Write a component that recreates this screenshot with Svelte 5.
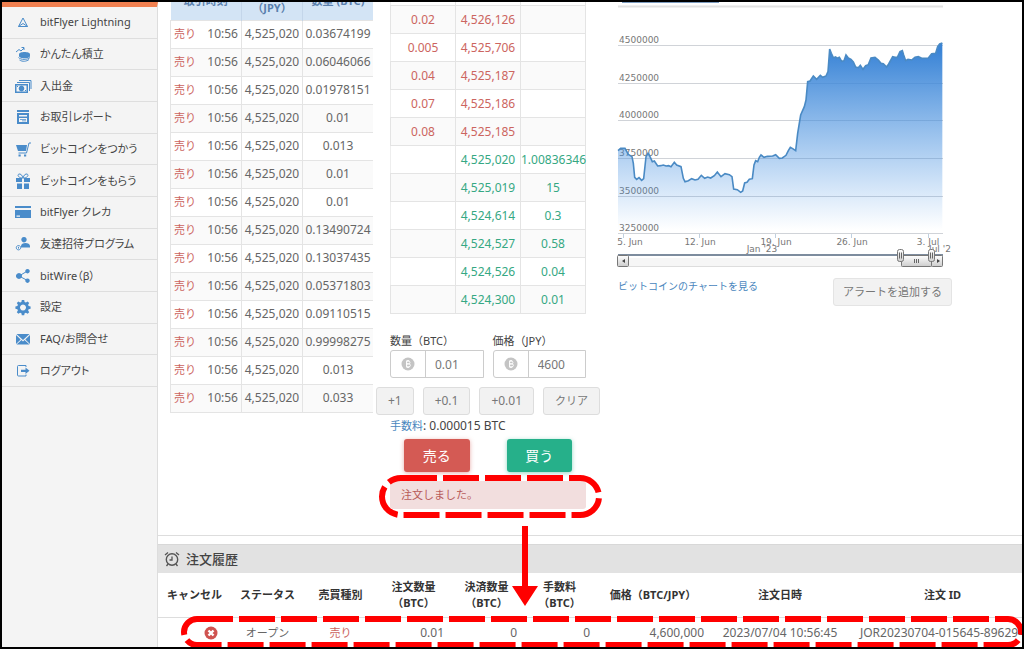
<script lang="ts">
  interface MenuItem {
    label: string;
    // fill and line paths, both on an 18 x 18 grid
    fill?: string;
    line?: string;
  }

  const menu: MenuItem[] = [
    { label: 'bitFlyer Lightning', line: 'M9 5 4.500 13.500h9zM4.500 13.500 9 10.500l4.500 3' },
    {
      label: 'かんたん積立',
      line: 'M2 7l3-2.500 2 1.500 3-3M7.500 2.500H10V5M4.500 12.500c2 2.500 9 2.500 11.500 0M5.500 15c3 2 7 1.500 9.500-.5',
      fill: 'M5 9.500c0-3.200 11-3.200 11 0v1.500c0 3-11 3-11 0z',
    },
    {
      label: '入出金',
      fill: 'M1 7h13v9H1zM2.500 8.500v6h10v-6zM7.500 8.700a2.800 2.800 0 1 0 .01 0zM3 9h1v1H3zM11 13h1v1h-1z',
      line: 'M3 5.500h12.500V14M5 3.500h12V12',
    },
    {
      label: 'お取引レポート',
      fill: 'M3 2h12v2H3zM3 5h12v11H3zM5 7v1.500h8V7zM5 10v4h8v-4zM6 11h6v.8H6zM8 12.500h4v.8H8z',
    },
    {
      label: 'ビットコインをつかう',
      fill: 'M2 5h11l-1 6H4zM4.500 14.500h2.200v2H4.500zM10 14.500h2.200v2H10z',
      line: 'M17 3h-2l-2.500 10H4.500',
    },
    {
      label: 'ビットコインをもらう',
      fill: 'M2 6h14v4H10V6H8v4H2zM3 11.500h5V17H3zM10 11.500h5V17h-5z',
      line: 'M9 6C3 6 3 1.500 6 2c2 .3 3 4 3 4s1-3.700 3-4c3-.5 3 4-3 4z',
    },
    { label: 'bitFlyer クレカ', fill: 'M1 3h16v2H1zM1 7h16v8H1zM2.500 12.500v1.300H6v-1.300z' },
    {
      label: '友達招待プログラム',
      fill: 'M10 2a2.700 2.700 0 1 1-.01 0zM7 12.500V11c0-4 9-4 9 0v1.500z',
      line: 'M4.500 10.500a2.200 2.200 0 1 1-.01 0zM4.500 11.800v1.800',
    },
    {
      label: 'bitWire（β）',
      fill: 'M5 6a3 3 0 1 1-.01 0zM13.500 2a2.200 2.200 0 1 1-.01 0zM13.500 11.500a2.200 2.200 0 1 1-.01 0z',
      line: 'M13.500 4 5 9l8.500 4.500',
    },
    {
      label: '設定',
      fill: 'M7.800 2h2.400l.4 2 1.300.5 1.700-1.100 1.600 1.600-1.100 1.700.5 1.300 2 .4v2.400l-2 .4-.5 1.300 1.100 1.700-1.600 1.600-1.700-1.100-1.300.5-.4 2H7.800l-.4-2-1.300-.5-1.700 1.100-1.600-1.600 1.100-1.700-.5-1.300-2-.4V8.400l2-.4.5-1.300L2.800 5l1.600-1.600 1.700 1.100L7.400 4zM9 6.600a3 3 0 1 0 .01 0z',
    },
    {
      label: 'FAQ/お問合せ',
      fill: 'M2.500 4h13L9 10zM2 5l4.700 4.500L2 14zM16 5v9l-4.700-4.500zM2.500 14.500 7.500 10 9 11.500l1.500-1.500 5 4.500z',
    },
    {
      label: 'ログアウト',
      line: 'M12 5V3.500H4.500q-1 0-1 1v8.500q0 1 1 1H12V12.500',
      fill: 'M7 7.700h4.500V5.500L15.500 8.800l-4 3.300V10H7z',
    },
  ];

  const trades = [
    '0.03674199', '0.06046066', '0.01978151', '0.01', '0.013', '0.01', '0.01',
    '0.13490724', '0.13037435', '0.05371803', '0.09110515', '0.99998275', '0.013', '0.033',
  ];

  const asks = [
    ['0.02', '4,526,126'],
    ['0.005', '4,525,706'],
    ['0.04', '4,525,187'],
    ['0.07', '4,525,186'],
    ['0.08', '4,525,185'],
  ];

  const bids = [
    ['4,525,020', '1.00836346'],
    ['4,525,019', '15'],
    ['4,524,614', '0.3'],
    ['4,524,527', '0.58'],
    ['4,524,526', '0.04'],
    ['4,524,300', '0.01'],
  ];

  const steps = ['+1', '+0.1', '+0.01', 'クリア'];

  const levels = [
    { y: 45, label: '4500000' },
    { y: 83, label: '4250000' },
    { y: 120, label: '4000000' },
    { y: 158, label: '3750000' },
    { y: 196, label: '3500000' },
    { y: 233, label: '3250000' },
  ];

  const days = [
    { x: 5, label: '5. Jun', at: 12 },
    { x: 81, label: '12. Jun', at: 82 },
    { x: 157, label: '19. Jun', at: 158 },
    { x: 233, label: '26. Jun', at: 234 },
    { x: 310, label: '3. Jul', at: 310 },
  ];

  // price samples, in thirds of a chart unit
  const prices = [
    [0, 452], [8, 445], [21, 445], [31, 463], [42, 470], [46, 490], [50, 532], [56, 538], [63, 533],
    [71, 541], [77, 536], [84, 470], [90, 460], [96, 470], [103, 485], [109, 483], [119, 498],
    [128, 497], [136, 495], [144, 498], [152, 497], [159, 500], [169, 487], [176, 495], [189, 500],
    [196, 535], [201, 545], [211, 542], [221, 536], [231, 540], [240, 538], [250, 526], [260, 535],
    [269, 531], [278, 534], [289, 527], [298, 516], [309, 530], [321, 521], [334, 524], [342, 530],
    [347, 567], [358, 569], [368, 577], [374, 573], [380, 549], [387, 547], [394, 538], [403, 536],
    [408, 495], [413, 482], [419, 485], [424, 472], [429, 465], [438, 472], [448, 469], [464, 468],
    [473, 464], [484, 475], [493, 474], [504, 466], [511, 452], [517, 442], [524, 446], [533, 452],
    [539, 400], [548, 345], [559, 320], [564, 300], [569, 245], [576, 243], [586, 228], [596, 238],
    [607, 226], [614, 232], [624, 228], [630, 215], [635, 147], [640, 160], [646, 173], [653, 171],
    [657, 175], [664, 172], [671, 184], [678, 182], [684, 165], [691, 174], [699, 178], [706, 186],
    [713, 201], [721, 203], [727, 196], [735, 208], [743, 197], [751, 194], [759, 174], [771, 172],
    [781, 180], [789, 190], [796, 191], [806, 201], [812, 192], [824, 170], [831, 172], [838, 172],
    [846, 155], [853, 152], [857, 165], [863, 182], [870, 178], [881, 180], [891, 172], [901, 170],
    [911, 175], [931, 174], [941, 161], [953, 160], [959, 140], [965, 132], [973, 129],
  ];
  const priceLine = 'M' + prices.map(([x, y]) => `${x / 3} ${y / 3}`).join('L');

  let amount = $state('0.01');
  let price = $state('4600');

  function step(label: string): void {
    if (label.startsWith('+')) {
      amount = String(Number((Number(amount) + Number(label)).toFixed(8)));
    } else {
      amount = '';
    }
  }
</script>

{#snippet coin()}
  <svg class="coin" viewBox="0 0 14 14" aria-hidden="true">
    <circle cx="7" cy="7" r="6.500" fill="#c4c4c4" />
    <path
      d="M5 4.200h2.600a1.300 1.300 0 0 1 0 2.700H5.500h2.400a1.400 1.400 0 0 1 0 2.900H5M5.600 4.200v5.600M6.300 3v1.200M7.700 3v1.200M6.300 9.800V11M7.700 9.800V11"
      fill="none"
      stroke="#fff"
    />
  </svg>
{/snippet}

<div class="app">
  <nav class="sidebar" aria-label="メニュー">
    <ul>
      {#each menu as item}
        <li>
          <a href="#menu">
            <svg viewBox="0 0 18 18" aria-hidden="true">
              {#if item.fill}<path d={item.fill} fill="#4a8cca" fill-rule="evenodd" />{/if}
              {#if item.line}<path d={item.line} fill="none" stroke="#4a8cca" />{/if}
            </svg>
            <span>{item.label}</span>
          </a>
        </li>
      {/each}
    </ul>
  </nav>

  <main>
    <section class="market">
      <table class="grid trades">
        <colgroup><col class="kind" /><col class="time" /><col class="rate" /><col /></colgroup>
        <thead>
          <tr>
            <th colspan="2">取引時刻</th>
            <th>（JPY）</th>
            <th>数量 (BTC)</th>
          </tr>
        </thead>
        <tbody>
          {#each trades as size}
            <tr>
              <td class="sell kind">売り</td>
              <td class="time">10:56</td>
              <td>4,525,020</td>
              <td>{size}</td>
            </tr>
          {/each}
        </tbody>
      </table>

      <div class="order">
        <table class="grid board">
          <tbody>
            <tr><td></td><td></td><td></td></tr>
            {#each asks as [size, rate]}
              <tr class="sell"><td>{size}</td><td>{rate}</td><td></td></tr>
            {/each}
            {#each bids as [rate, size]}
              <tr class="buy"><td></td><td>{rate}</td><td>{size}</td></tr>
            {/each}
          </tbody>
        </table>

        <div class="fields">
          <div class="field">
            <label for="amount">数量（BTC）</label>
            <div class="box">{@render coin()}<input id="amount" type="text" bind:value={amount} /></div>
          </div>
          <div class="field">
            <label for="price">価格（JPY）</label>
            <div class="box">{@render coin()}<input id="price" type="text" bind:value={price} /></div>
          </div>
        </div>

        <div class="steps">
          {#each steps as label}
            <button type="button" class="plain" onclick={() => step(label)}>{label}</button>
          {/each}
        </div>

        <p class="fee"><a href="#fee">手数料</a>: 0.000015 BTC</p>

        <div class="actions">
          <button type="button" class="do-sell">売る</button>
          <button type="button" class="do-buy">買う</button>
        </div>

        <p class="alert" role="status">注文しました。</p>
      </div>

      <div class="chart">
        <svg class="plot" viewBox="0 2 334 268" role="img" aria-label="BTC/JPY">
          <defs>
            <linearGradient id="area" gradientUnits="userSpaceOnUse" x1="0" y1="50" x2="0" y2="230">
              <stop offset="0" stop-color="#3a84d6" />
              <stop offset="1" stop-color="#4a96e6" stop-opacity="0" />
            </linearGradient>
            <linearGradient id="knob" x1="0" y1="0" x2="0" y2="1">
              <stop offset="0" stop-color="#fff" />
              <stop offset="1" stop-color="#ccc" />
            </linearGradient>
          </defs>

          <path d="M4 2.500h97" stroke="#7c9cc0" />
          <path d="M0 6.500h325" stroke="#e2e2e2" stroke-width="2" />
          {#each levels as level}
            <path d="M0 {level.y + 0.5}h325" stroke="#d0d3d8" />
            <text x="1" y={level.y - 2}>{level.label}</text>
          {/each}
          {#each days as day}
            <path d="M{day.x + 0.5} 234v4" stroke="#c0d0e0" />
            <text x={day.at} y="245" text-anchor="middle">{day.label}</text>
          {/each}

          <path d="{priceLine}V233H0z" fill="url(#area)" />
          <path d={priceLine} fill="none" stroke="#4a8ac4" stroke-width="1.600" />

          <path d="M11 266.500h303" stroke="#ddd" />
          <path d="M11 258h272v8H11z" fill="#f6f6f6" />
          <path d="M0 255h325" stroke="#7d8c9e" stroke-width="2" />
          <text x="144" y="252" text-anchor="middle">Jan '23</text>
          <text x="311" y="252">Jul '2</text>
          <g fill="url(#knob)" stroke="#777">
            <rect x="-.5" y="255.500" width="11" height="11" rx="1" />
            <rect x="283.500" y="255.500" width="30" height="11" rx="1" />
            <rect x="313.500" y="255.500" width="11" height="11" rx="1" />
            <rect x="279.500" y="249.500" width="6" height="12" rx="2" />
            <rect x="310.500" y="249.500" width="6" height="12" rx="2" />
          </g>
          <path
            d="M281.500 252.500v6M283.500 252.500v6M312.500 252.500v6M314.500 252.500v6M296.500 259v4M298.500 259v4M300.500 259v4"
            stroke="#666"
          />
          <path d="M7 259v4l-3-2zM319 259v4l3-2z" fill="#444" />
        </svg>

        <div class="below">
          <a href="#chart">ビットコインのチャートを見る</a>
          <button type="button" class="plain">アラートを追加する</button>
        </div>
      </div>
    </section>

    <section class="history">
      <h2>
        <svg viewBox="0 0 16 16" aria-hidden="true">
          <circle cx="8" cy="8.500" r="5.700" fill="none" stroke="#555" stroke-width="1.400" />
          <path d="M8 5.500v3.500H5.500M1 4l3-2.500M15 4l-3-2.500M4 13l-1.500 2M12 13l1.500 2" fill="none" stroke="#555" stroke-width="1.300" />
        </svg>
        注文履歴
      </h2>
      <table>
        <colgroup>
          <col span="6" class="narrow" /><col class="wide" /><col class="date" /><col />
        </colgroup>
        <thead>
          <tr>
            <th>キャンセル</th>
            <th>ステータス</th>
            <th>売買種別</th>
            <th>注文数量<br />（BTC）</th>
            <th>決済数量<br />（BTC）</th>
            <th>手数料<br />（BTC）</th>
            <th>価格（BTC/JPY）</th>
            <th>注文日時</th>
            <th>注文 ID</th>
          </tr>
        </thead>
        <tbody>
          <tr>
            <td class="cancel">
              <button type="button" aria-label="キャンセル">
                <svg viewBox="0 0 14 14" aria-hidden="true">
                  <circle cx="7" cy="7" r="6.500" fill="#cf5350" />
                  <path d="m4.500 4.500 5 5m0-5-5 5" stroke="#fff" stroke-width="2.400" />
                </svg>
              </button>
            </td>
            <td>オープン</td>
            <td class="sell">売り</td>
            <td class="num">0.01</td>
            <td class="num">0</td>
            <td class="num">0</td>
            <td class="num">4,600,000</td>
            <td>2023/07/04 10:56:45</td>
            <td>JOR20230704-015645-896294</td>
          </tr>
        </tbody>
      </table>
    </section>
  </main>

  <svg class="marks" aria-hidden="true">
    <rect x="382" y="478" width="217" height="37" rx="19" />
    <rect class="row-mark" x="184" y="619" height="26" rx="13" />
    <path d="M522 526h6v60h10l-13 20-13-20h10z" />
  </svg>
</div>

<style>
  :global(body) {
    margin: 0;
  }

  .app {
    position: relative;
    display: flex;
    box-sizing: border-box;
    height: 100vh;
    overflow: hidden;
    border: 2px solid #000;
    background: #fff;
    color: #444;
    font-family: 'Noto Sans', 'Noto Sans CJK JP', sans-serif;
    font-size: 11px;
    line-height: 16px;
  }

  a {
    color: #4a86bd;
    text-decoration: none;
  }

  button,
  input {
    box-sizing: border-box;
    font-family: inherit;
    line-height: inherit;
  }

  p,
  h2,
  ul {
    margin: 0;
    padding: 0;
  }

  .sidebar {
    flex: 0 0 155px;
    border-top: 5px solid #f08050;
    border-right: 1px solid #ddd;
    background: #f4f4f4;
  }

  .sidebar ul {
    display: grid;
    grid-auto-rows: 1fr;
    min-height: 380px;
    list-style: none;
  }

  .sidebar li {
    display: flex;
    border-bottom: 1px solid #dedede;
  }

  .sidebar a {
    display: flex;
    flex: 1;
    align-items: center;
    gap: 8px;
    padding-left: 12px;
    color: #444;
    white-space: nowrap;
    font-feature-settings: 'palt';
  }

  .sidebar svg {
    width: 18px;
    height: 18px;
  }

  main {
    flex: 1;
    min-width: 0;
    margin-top: -25px;
  }

  .market {
    display: flex;
    align-items: flex-start;
    padding: 0 0 26px 12px;
    border-bottom: 1px solid #ddd;
  }

  table {
    border-collapse: collapse;
    table-layout: fixed;
  }

  .grid {
    color: #666;
    font-size: 12px;
  }

  .grid td {
    box-sizing: border-box;
    height: 28px;
    padding: 0;
    border: 1px solid #e4e4e4;
    text-align: center;
    white-space: nowrap;
  }

  .grid tr:nth-child(even) {
    background: #fafafa;
  }

  .board tr:nth-child(odd) td:first-child {
    border-left-color: #eee;
  }

  .trades {
    flex: 0 0 auto;
    width: 203px;
  }

  .trades th {
    box-sizing: border-box;
    height: 43px;
    padding: 5px 0 0;
    border-right: 1px solid #c4d6ea;
    background: #d3e4f5;
    color: #5a80ad;
    font-size: 11px;
  }

  .trades th:nth-child(2) {
    padding-top: 20px;
  }

  .trades th:last-child,
  .trades td:last-child {
    border-right: none;
  }

  col.kind {
    width: 34px;
  }

  col.time {
    width: 37px;
  }

  col.rate {
    width: 61px;
  }

  .trades .kind {
    padding-left: 3px;
    border-right: none;
    font-size: 11px;
    text-align: left;
  }

  .trades .time {
    padding-right: 3px;
    border-left: none;
    text-align: right;
  }

  .sell,
  .history .sell {
    color: #cc6560;
  }

  .buy {
    color: #35a883;
  }

  .order {
    flex: 0 0 196px;
    min-width: 0;
    margin: 0 32px 0 17px;
  }

  .board {
    width: 196px;
  }

  .fields {
    display: flex;
    gap: 9px;
    margin-top: 19px;
  }

  .field {
    flex: 1;
    min-width: 0;
  }

  .field label {
    display: block;
    white-space: nowrap;
  }

  .box {
    display: flex;
    align-items: center;
    box-sizing: border-box;
    height: 28px;
    margin-top: 1px;
    border: 1px solid #ccc;
    border-radius: 3px 0 0 3px;
    background: #fff;
  }

  .coin {
    flex: 0 0 14px;
    height: 14px;
    margin: 0 10px;
  }

  .box input {
    flex: 1;
    width: 100%;
    min-width: 0;
    height: 100%;
    padding: 0 9px;
    border: 0;
    border-left: 1px solid #ccc;
    background: none;
    color: #777;
    font-size: 12px;
  }

  .steps {
    display: flex;
    gap: 9px;
    margin: 9px -14px 0;
  }

  .plain {
    height: 28px;
    padding: 0 9px;
    border: 1px solid #ddd;
    border-radius: 3px;
    background: #f2f2f2;
    color: #777;
    font-size: 12px;
    white-space: nowrap;
  }

  .steps .plain {
    flex: 1 1 auto;
  }

  .steps .plain:last-child {
    font-size: 11px;
  }

  .fee {
    margin-top: 3px;
    font-size: 12px;
  }

  .fee a {
    font-size: 11px;
  }

  .actions {
    display: flex;
    gap: 37px;
    margin: 5px 14px 0;
  }

  .actions button {
    flex: 1;
    height: 33px;
    padding: 0;
    border: 0;
    border-radius: 3px;
    color: #fff;
    font-size: 14px;
  }

  .do-sell {
    background: #d45a54;
    box-shadow: 0 1px 4px #d45a5480;
  }

  .do-buy {
    background: #26b08a;
    box-shadow: 0 1px 4px #26b08a80;
  }

  .alert {
    margin-top: 9px;
    padding: 6px 11px;
    border-radius: 3px;
    background: #f2dede;
    color: #b85c5a;
  }

  .chart {
    flex: 0 1 334px;
    min-width: 0;
    padding-top: 25px;
  }

  .plot {
    display: block;
    width: 100%;
    overflow: visible;
  }

  .plot text {
    fill: #777;
    font-family: 'DejaVu Sans', sans-serif;
    font-size: 9px;
  }

  .below {
    display: flex;
    align-items: flex-start;
    justify-content: space-between;
    margin-top: 8px;
    white-space: nowrap;
  }

  .below a {
    font-size: 10px;
  }

  .below .plain {
    border-color: #e4e4e4;
    font-size: 11px;
  }

  .history {
    margin-top: 8px;
    overflow: hidden;
  }

  .history h2 {
    display: flex;
    align-items: center;
    gap: 6px;
    height: 28px;
    padding-left: 6px;
    border-top: 1px solid #d8d8d8;
    background: #e2e2e2;
    font-size: 13px;
    font-weight: 500;
  }

  .history h2 svg {
    width: 16px;
    height: 16px;
  }

  .history table {
    width: calc(100% + 13px);
  }

  .narrow {
    width: 73px;
  }

  .wide {
    width: 114px;
  }

  .date {
    width: 140px;
  }

  .history th {
    height: 44px;
    padding: 0;
    color: #333;
    white-space: nowrap;
  }

  .history td {
    height: 29px;
    padding: 0;
    border-top: 1px solid #ddd;
    color: #666;
    font-size: 12px;
    text-align: center;
    white-space: nowrap;
  }

  .history td:nth-child(2),
  .history .sell {
    font-size: 11px;
  }

  .history .num {
    padding-right: 6px;
    text-align: right;
  }

  .history .cancel {
    padding-left: 46px;
  }

  .cancel button {
    display: block;
    width: 14px;
    height: 14px;
    margin: 0;
    padding: 0;
    border: 0;
    background: none;
  }

  .cancel svg {
    display: block;
  }

  /* callouts drawn over the page */
  .marks {
    position: absolute;
    top: -2px;
    left: -2px;
    width: calc(100% + 4px);
    height: calc(100% + 4px);
    fill: #f00;
    pointer-events: none;
  }

  .marks rect {
    fill: none;
    stroke: #f00;
    stroke-width: 6px;
    stroke-dasharray: 36 6;
  }

  .marks .row-mark {
    width: calc(100% - 187px);
  }
</style>
